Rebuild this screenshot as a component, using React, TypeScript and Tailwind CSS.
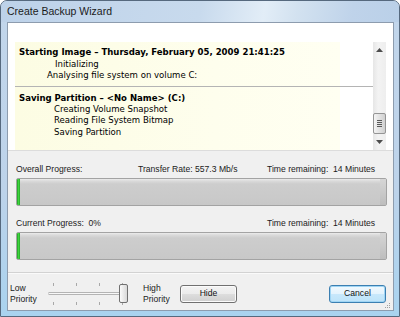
import React from 'react';

const ui = { fontFamily: '"Liberation Sans", Arial, sans-serif' };
const logFont = { fontFamily: '"DejaVu Sans Condensed", "DejaVu Sans", "Liberation Sans", sans-serif' };

function ProgressBar() {
  return (
    <div className="h-[28px] rounded-[2px] border border-[#a3a3a3] bg-[linear-gradient(to_bottom,#ececec_0px,#dadada_2px,#cdcdcd_5px,#c8c8c8_100%)] flex overflow-hidden">
      <div className="w-[3px] bg-[linear-gradient(to_right,#1f9e22,#3fd33f,#25a628)]" />
      <div className="flex-1" />
      <div className="w-[6px] bg-[linear-gradient(to_bottom,#d6d6d6,#bdbdbd)]" />
    </div>
  );
}

function Button({ label, focused }: { label: string; focused?: boolean }) {
  return (
    <button
      className={
        focused
          ? 'w-[57px] h-[18px] rounded-[3px] border border-[#3c7fb1] bg-[linear-gradient(to_bottom,#f1f9fe_0%,#e3f3fd_50%,#c8e8fb_51%,#bde3f9_100%)] shadow-[inset_0_0_0_1px_#9fd5f4] text-[8.6px] text-[#111]'
          : 'w-[57px] h-[18px] rounded-[3px] border border-[#707070] bg-[linear-gradient(to_bottom,#f3f3f3_0%,#ebebeb_50%,#dddddd_51%,#cfcfcf_100%)] shadow-[inset_0_0_0_1px_#fbfbfb] text-[8.6px] text-[#111]'
      }
    >
      {label}
    </button>
  );
}

function Slider() {
  return (
    <svg width="85" height="28" viewBox="0 0 85 28">
      {[8, 31, 54, 77].map((x) => (
        <g key={x}>
          <line x1={x + 0.5} y1="3" x2={x + 0.5} y2="6" stroke="#a8a8a8" />
          <line x1={x + 0.5} y1="22" x2={x + 0.5} y2="25" stroke="#a8a8a8" />
        </g>
      ))}
      <rect x="4" y="12.5" width="74" height="2" fill="#f8f8f8" stroke="#b4b4b4" />
      <defs>
        <linearGradient id="thumb" x1="0" y1="0" x2="1" y2="0">
          <stop offset="0" stopColor="#fdfdfd" />
          <stop offset="1" stopColor="#d6d6d6" />
        </linearGradient>
      </defs>
      <rect x="74.5" y="4.5" width="8" height="18" rx="1.5" fill="url(#thumb)" stroke="#707070" />
    </svg>
  );
}

function Scrollbar() {
  return (
    <div className="w-[13px] flex flex-col bg-[linear-gradient(to_right,#e6e6e6,#f3f3f3_40%,#eeeeee)]">
      <div className="h-[16px] flex items-center justify-center">
        <svg width="7" height="4" viewBox="0 0 7 4">
          <path d="M0 4 L3.5 0 L7 4 Z" fill="#4d4d4d" />
        </svg>
      </div>
      <div className="h-[55px]" />
      <div className="h-[21px] rounded-[2px] border border-[#959595] bg-[linear-gradient(to_right,#f4f4f4,#e2e2e2_50%,#d0d0d0)] flex flex-col items-center justify-center gap-[1px]">
        {[0, 1, 2, 3].map((i) => (
          <div key={i} className="w-[5px] h-[1px] bg-[#5a5a5a]" />
        ))}
      </div>
      <div className="h-[16px] flex items-center justify-center">
        <svg width="7" height="4" viewBox="0 0 7 4">
          <path d="M0 0 L3.5 4 L7 0 Z" fill="#4d4d4d" />
        </svg>
      </div>
    </div>
  );
}

export default function App() {
  return (
    <div
      className="w-[400px] h-[317px] rounded-t-[7px] border border-[#56697e] bg-[linear-gradient(to_bottom,#c2d6eb_0%,#bdd3ea_60%,#a9d3ef_100%)] flex flex-col overflow-hidden"
      style={ui}
    >
      {/* Title bar */}
      <div className="h-[21px] pl-[6px] flex items-center bg-[linear-gradient(100deg,#bdd2e9_0%,#c8daed_50%,#e2edf7_66%,#d3e2f0_74%,#bfd3ea_88%,#bad0e8_100%)]">
        <span className="text-[10.5px] text-[#1b1b1b]">Create Backup Wizard</span>
      </div>

      {/* Client area */}
      <div className="relative flex-1 ml-[6px] mr-[5px] mb-[5px] border border-[#8d9cae] bg-[#f0f0f0] flex flex-col">
        {/* Log panel */}
        <div className="h-[128px] bg-white border-b border-[#dcdcdc] flex pl-[7px] pt-[19px] pr-[6px] overflow-hidden">
          <div
            className="w-[358px] bg-[linear-gradient(to_right,#fcfce3_0px,#fefeed_200px,#fffff2_325px,#ffffff_325px)] text-[9.5px] font-stretch-condensed text-black"
            style={logFont}
          >
            <div className="pt-[4px] pb-[5px] pl-[4px] leading-[11.5px]">
              <div className="font-bold">Starting Image – Thursday, February 05, 2009 21:41:25</div>
              <div className="pl-[36px]">Initializing</div>
              <div className="pl-[28px]">Analysing file system on volume C:</div>
            </div>
            <div className="h-[1px] bg-[#b4b4b4]" />
            <div className="pt-[5px] pl-[4px] leading-[11.4px]">
              <div className="font-bold">Saving Partition – &lt;No Name&gt; (C:)</div>
              <div className="pl-[35px]">Creating Volume Snapshot</div>
              <div className="pl-[35px]">Reading File System Bitmap</div>
              <div className="pl-[35px]">Saving Partition</div>
            </div>
          </div>
          <Scrollbar />
        </div>

        {/* Progress */}
        <div className="pl-[8px] pr-[6px] pt-[12px] pb-[12px] text-[8.6px] text-[#1b1b1b]">
          <div className="h-[12px] flex items-center whitespace-pre">
            <span className="w-[122px]">Overall Progress:</span>
            <span className="w-[129px]">Transfer Rate: 557.3 Mb/s</span>
            <span>Time remaining:  14 Minutes</span>
          </div>
          <div className="mt-[3px]">
            <ProgressBar />
          </div>
          <div className="mt-[11px] h-[12px] flex items-center whitespace-pre">
            <span className="w-[251px]">Current Progress:  0%</span>
            <span>Time remaining:  14 Minutes</span>
          </div>
          <div className="mt-[3px]">
            <ProgressBar />
          </div>
        </div>

        {/* Bottom */}
        <div className="flex-1 border-t border-[#d2d2d2] shadow-[inset_0_1px_0_#fafafa] pl-[2px] pr-[7px] pt-[4px] flex items-center text-[8.6px] text-[#1b1b1b]">
          <div className="w-[35px] leading-[11px]">
            <div>Low</div>
            <div>Priority</div>
          </div>
          <Slider />
          <div className="ml-[13px] w-[37px] leading-[11px]">
            <div>High</div>
            <div>Priority</div>
          </div>
          <Button label="Hide" />
          <div className="flex-1" />
          <Button label="Cancel" focused />
          <svg className="absolute right-[2px] bottom-[1px]" width="8" height="8" viewBox="0 0 8 8">
            {[
              [6, 2],
              [6, 4],
              [4, 4],
              [6, 6],
              [4, 6],
              [2, 6],
            ].map(([x, y], i) => (
              <rect key={i} x={x} y={y} width="1" height="1" fill="#a0a0a0" />
            ))}
          </svg>
        </div>
      </div>
    </div>
  );
}
